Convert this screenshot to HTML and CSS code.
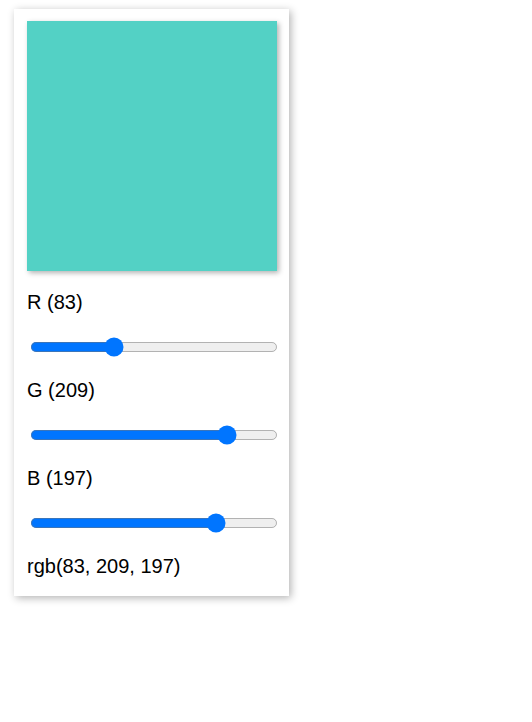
FILE: index.html
```html
<!DOCTYPE html>
<html>
<head>
<meta charset="utf-8">
<link rel="stylesheet" href="styles.css">
</head>
<body>
<div class="card">
  <div class="swatch"></div>
  <p class="label">R (83)</p>
  <input class="slider" type="range" min="0" max="255" value="83">
  <p class="label">G (209)</p>
  <input class="slider" type="range" min="0" max="255" value="209">
  <p class="label">B (197)</p>
  <input class="slider" type="range" min="0" max="255" value="197">
  <p class="label result">rgb(83, 209, 197)</p>
</div>
</body>
</html>
```
FILE: styles.css
```css
html, body {
  margin: 0;
  padding: 0;
  background: #ffffff;
  min-height: 100%;
}
html {
  height: 100%;
}
body {
  font-family: "Liberation Sans", Arial, sans-serif;
  font-size: 20px;
  color: #000;
  padding-top: 9px;
  box-sizing: border-box;
}
.card {
  width: 250px;
  margin: 0 0 0 14px;
  padding: 12px 12px 17.5px 13px;
  background: #fff;
  box-shadow: 2px 2px 8px rgba(0, 0, 0, 0.3);
  display: flow-root;
}
.swatch {
  width: 250px;
  height: 250px;
  background: rgb(83, 209, 197);
  box-shadow: 2px 2px 5px rgba(0, 0, 0, 0.3);
}
.label {
  margin: 20px 0;
  line-height: normal;
}
.result {
  margin-bottom: 0;
}
.slider {
  display: block;
  zoom: 1.25;
  width: 199px;
  margin: 18px 2px;
}
```
